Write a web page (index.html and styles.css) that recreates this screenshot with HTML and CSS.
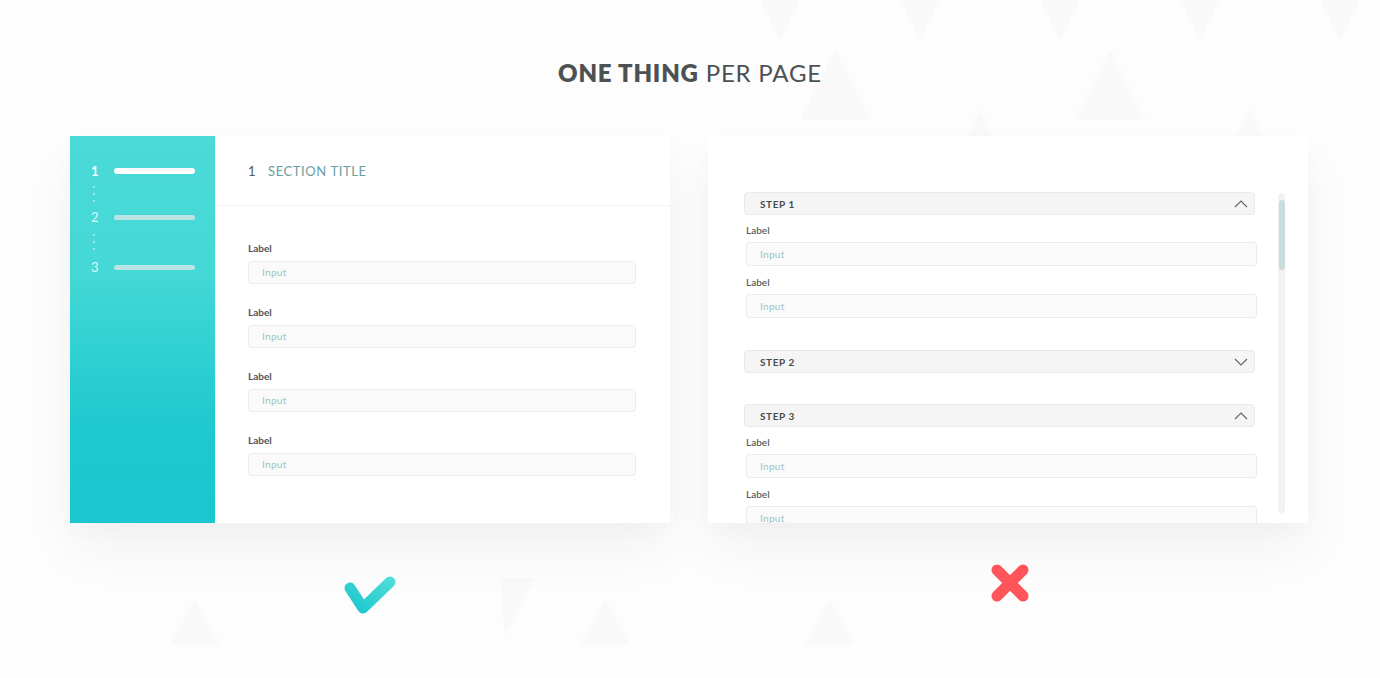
FILE: index.html
```html
<!DOCTYPE html>
<html>
<head>
<meta charset="utf-8">
<link rel="stylesheet" href="styles.css">
</head>
<body>
<div class="bg" aria-hidden="true">
  <svg width="1380" height="678" viewBox="0 0 1380 678">
    <g fill="#f9f9f9">
      <polygon points="835,50 870,120 800,120"/>
      <polygon points="980,110 1015,180 945,180"/>
      <polygon points="1110,50 1145,120 1075,120"/>
      <polygon points="1250,110 1285,180 1215,180"/>
      <polygon points="760,0 800,0 780,40"/>
      <polygon points="900,0 940,0 920,40"/>
      <polygon points="1040,0 1080,0 1060,40"/>
      <polygon points="1180,0 1220,0 1200,40"/>
      <polygon points="1320,0 1360,0 1340,40"/>
      <polygon points="195,600 220,645 170,645"/>
      <polygon points="605,600 630,645 580,645"/>
      <polygon points="830,600 855,645 805,645"/>
      <polygon points="500,578 535,578 505,635"/>
    </g>
  </svg>
</div>

<header class="title"><b>ONE THING</b> PER PAGE</header>

<main class="compare">
  <section class="col">
    <div class="card good">
      <aside class="side">
        <div class="step-row active"><span class="num">1</span><span class="bar"></span></div>
        <div class="dots"><i></i><i></i><i></i></div>
        <div class="step-row"><span class="num">2</span><span class="bar"></span></div>
        <div class="dots long"><i></i><i></i><i></i></div>
        <div class="step-row"><span class="num">3</span><span class="bar"></span></div>
      </aside>
      <div class="panel">
        <div class="panel-head"><span class="pn">1</span><span class="pt">SECTION TITLE</span></div>
        <div class="form">
          <div class="field"><label>Label</label><div class="input">Input</div></div>
          <div class="field"><label>Label</label><div class="input">Input</div></div>
          <div class="field"><label>Label</label><div class="input">Input</div></div>
          <div class="field"><label>Label</label><div class="input">Input</div></div>
        </div>
      </div>
    </div>
    <div class="verdict check">
      <svg width="56" height="44" viewBox="0 0 56 44">
        <defs>
          <linearGradient id="cg" x1="0" y1="1" x2="1" y2="0">
            <stop offset="0" stop-color="#1cc6cc"/>
            <stop offset="1" stop-color="#4ddcd7"/>
          </linearGradient>
        </defs>
        <path d="M8 14 L21 34 L48 8" fill="none" stroke="url(#cg)" stroke-width="11" stroke-linecap="round" stroke-linejoin="round"/>
      </svg>
    </div>
  </section>

  <section class="col">
    <div class="card bad">
      <div class="acc">
        <div class="sec">
          <div class="sec-head"><span>STEP 1</span>
            <svg class="chev" width="14" height="8" viewBox="0 0 14 8"><path d="M1 7 L7 1 L13 7" fill="none" stroke="#5d6466" stroke-width="1.1"/></svg>
          </div>
          <div class="rf"><label>Label</label><div class="input">Input</div></div>
          <div class="rf"><label>Label</label><div class="input">Input</div></div>
        </div>
        <div class="sec">
          <div class="sec-head"><span>STEP 2</span>
            <svg class="chev" width="14" height="8" viewBox="0 0 14 8"><path d="M1 1 L7 7 L13 1" fill="none" stroke="#5d6466" stroke-width="1.1"/></svg>
          </div>
        </div>
        <div class="sec s3">
          <div class="sec-head"><span>STEP 3</span>
            <svg class="chev" width="14" height="8" viewBox="0 0 14 8"><path d="M1 7 L7 1 L13 7" fill="none" stroke="#5d6466" stroke-width="1.1"/></svg>
          </div>
          <div class="rf"><label>Label</label><div class="input">Input</div></div>
          <div class="rf"><label>Label</label><div class="input">Input</div></div>
        </div>
      </div>
      <div class="scroll"><div class="thumb"></div></div>
    </div>
    <div class="verdict cross">
      <svg width="44" height="44" viewBox="0 0 44 44">
        <path d="M9 9 L35 35 M35 9 L9 35" fill="none" stroke="#ff5459" stroke-width="11" stroke-linecap="round"/>
      </svg>
    </div>
  </section>
</main>
</body>
</html>
```

FILE: styles.css
```css
* { box-sizing: border-box; }
html, body { margin: 0; padding: 0; }
body {
  width: 1380px;
  height: 678px;
  overflow: hidden;
  background: #fdfdfd;
  font-family: Lato, "Open Sans", "Liberation Sans", sans-serif;
  color: #4b5052;
  position: relative;
}
.bg { position: absolute; left: 0; top: 0; z-index: 0; }
.bg svg { display: block; }

.title {
  position: relative;
  z-index: 1;
  text-align: center;
  font-size: 24px;
  letter-spacing: 0.8px;
  color: #4c5153;
  padding-top: 59px;
  height: 136px;
  line-height: 28px;
}
.title b { font-weight: 800; }

.compare {
  position: relative;
  z-index: 1;
  display: flex;
  gap: 38px;
  padding-left: 70px;
}
.col { width: 600px; display: flex; flex-direction: column; align-items: center; }

.card {
  width: 600px;
  height: 387px;
  background: #fff;
  box-shadow: 0 28px 50px rgba(0,0,0,0.045), 0 8px 20px rgba(0,0,0,0.02);
  display: flex;
  overflow: hidden;
}

/* left card */
.side {
  width: 145px;
  flex: none;
  background: linear-gradient(180deg, #4adad7 0%, #44d8d6 35%, #1ec9cf 75%, #1bc7cf 100%);
  padding: 28px 20px 0 20px;
  color: #fff;
}
.step-row { display: flex; align-items: center; height: 14px; }
.num { width: 24px; font-size: 13px; line-height: 14px; font-weight: 400; color: rgba(255,255,255,0.85); padding-left: 1px; }
.active .num { font-weight: 700; color: #fff; }
.bar { width: 81px; height: 5px; border-radius: 3px; background: rgba(232,232,232,0.72); }
.active .bar { height: 6px; background: #fff; }
.dots { height: 32px; display: flex; flex-direction: column; justify-content: center; gap: 5px; padding-left: 3px; }
.dots.long { height: 36px; }
.dots i { display: block; width: 2px; height: 2px; background: rgba(255,255,255,0.45); }

.panel { flex: 1; display: flex; flex-direction: column; }
.panel-head {
  height: 70px;
  border-bottom: 1px solid #f2f2f2;
  display: flex;
  align-items: center;
  padding-left: 33px;
  font-size: 13px;
  letter-spacing: 0.6px;
  padding-top: 1px;
}
.pn { color: #555a5c; width: 20px; }
.pt { color: #6a9ea1; }
.form { padding: 36px 34px 0 33px; display: flex; flex-direction: column; gap: 22px; }
.field label, .rf label {
  display: block;
  font-size: 10px;
  line-height: 12px;
  font-weight: 700;
  color: #4f5456;
}
.rf label { font-weight: 600; color: #5a5f61; }
.input {
  height: 23px;
  margin-top: 7px;
  border: 1px solid #ececec;
  border-radius: 3px;
  background: #fafafa;
  font-size: 10px;
  line-height: 21px;
  color: #9fc3c5;
  padding-left: 13px;
  letter-spacing: 0.3px;
}

/* right card */
.bad { padding: 56px 0 0 36px; }
.acc { width: 513px; display: flex; flex-direction: column; gap: 32px; }
.acc .s3 { margin-top: -1px; }
.sec-head {
  height: 23px;
  border: 1px solid #e9e9e9;
  border-radius: 4px;
  background: #f5f5f5;
  display: flex;
  align-items: center;
  justify-content: space-between;
  padding: 0 6px 0 15px;
  font-size: 10px;
  font-weight: 700;
  letter-spacing: 0.6px;
  color: #474c4e;
  width: 511px;
}
.rf { margin-top: 9px; padding-left: 2px; }
.rf + .rf { margin-top: 10px; }
.rf .input { height: 24px; margin-top: 6px; line-height: 22px; padding-left: 13px; }
.scroll {
  margin-left: 21px;
  margin-top: 1px;
  width: 7px;
  height: 320px;
  border-radius: 4px;
  background: #f2f2f2;
  padding-top: 7px;
  flex: none;
}
.thumb { width: 6px; height: 70px; margin-left: 1px; border-radius: 3px; background: #cbdcdd; }

.verdict { display: flex; }
.check { margin-top: 51px; }
.cross { margin-top: 38px; margin-left: 4px; }
```
